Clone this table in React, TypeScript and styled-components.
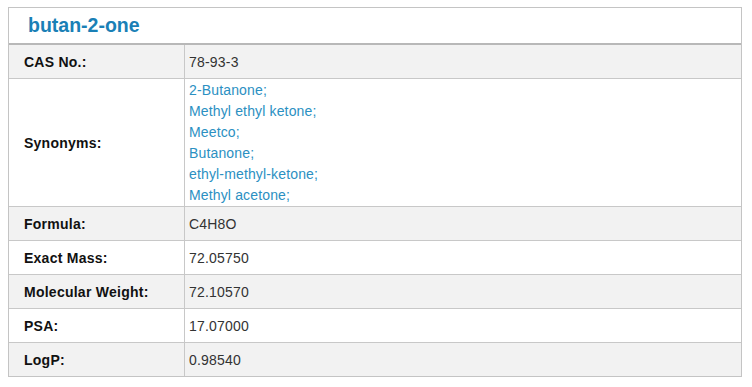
import React from "react";
import styled, { createGlobalStyle } from "styled-components";

const Global = createGlobalStyle`
  html, body { margin: 0; padding: 0; background: #ffffff; }
  body { font-family: "Liberation Sans", Arial, sans-serif; }
`;

const Card = styled.div`
  margin: 7px 0 0 8px;
  width: 732px;
  border: 1px solid #c4c4c4;
  background: #ffffff;
`;

const Header = styled.div`
  height: 35px;
  display: flex;
  align-items: center;
  padding-left: 19px;
  border-bottom: 2px solid #b8b8b8;
`;

const Title = styled.h1`
  margin: 0;
  font-size: 19.5px;
  font-weight: bold;
  color: #1a80b6;
  line-height: 22px;
  position: relative;
  top: -1px;
`;

const Row = styled.div<{ $shade: boolean; $h: number }>`
  display: grid;
  grid-template-columns: 176px 1fr;
  min-height: ${(p) => p.$h}px;
  background: ${(p) => (p.$shade ? "#f2f2f2" : "#ffffff")};
  border-bottom: 1px solid #c8c8c8;
  &:last-child { border-bottom: none; }
`;

const Label = styled.div`
  display: flex;
  align-items: center;
  padding-left: 15px;
  border-right: 1px solid #c8c8c8;
  font-size: 14px;
  font-weight: bold;
  color: #111111;
  letter-spacing: 0.25px;
`;

const Value = styled.div`
  display: flex;
  align-items: center;
  padding-left: 4px;
  font-size: 14px;
  color: #333333;
  letter-spacing: 0.2px;
`;

const SynList = styled.div`
  display: flex;
  flex-direction: column;
  padding-top: 1px;
`;

const Syn = styled.a`
  font-size: 14px;
  line-height: 21px;
  color: #2b90c2;
  text-decoration: none;
  letter-spacing: 0.15px;
`;

const synonyms = [
  "2-Butanone;",
  "Methyl ethyl ketone;",
  "Meetco;",
  "Butanone;",
  "ethyl-methyl-ketone;",
  "Methyl acetone;",
];

const rows: { label: string; value?: string }[] = [
  { label: "CAS No.:", value: "78-93-3" },
  { label: "Synonyms:" },
  { label: "Formula:", value: "C4H8O" },
  { label: "Exact Mass:", value: "72.05750" },
  { label: "Molecular Weight:", value: "72.10570" },
  { label: "PSA:", value: "17.07000" },
  { label: "LogP:", value: "0.98540" },
];

export default function App() {
  return (
    <>
      <Global />
      <Card>
        <Header>
          <Title>butan-2-one</Title>
        </Header>
        {rows.map((r, i) => (
          <Row key={r.label} $shade={i % 2 === 0} $h={r.value ? 33 : 127}>
            <Label>{r.label}</Label>
            {r.value ? (
              <Value>{r.value}</Value>
            ) : (
              <Value>
                <SynList>
                  {synonyms.map((s) => (
                    <Syn key={s}>{s}</Syn>
                  ))}
                </SynList>
              </Value>
            )}
          </Row>
        ))}
      </Card>
    </>
  );
}
